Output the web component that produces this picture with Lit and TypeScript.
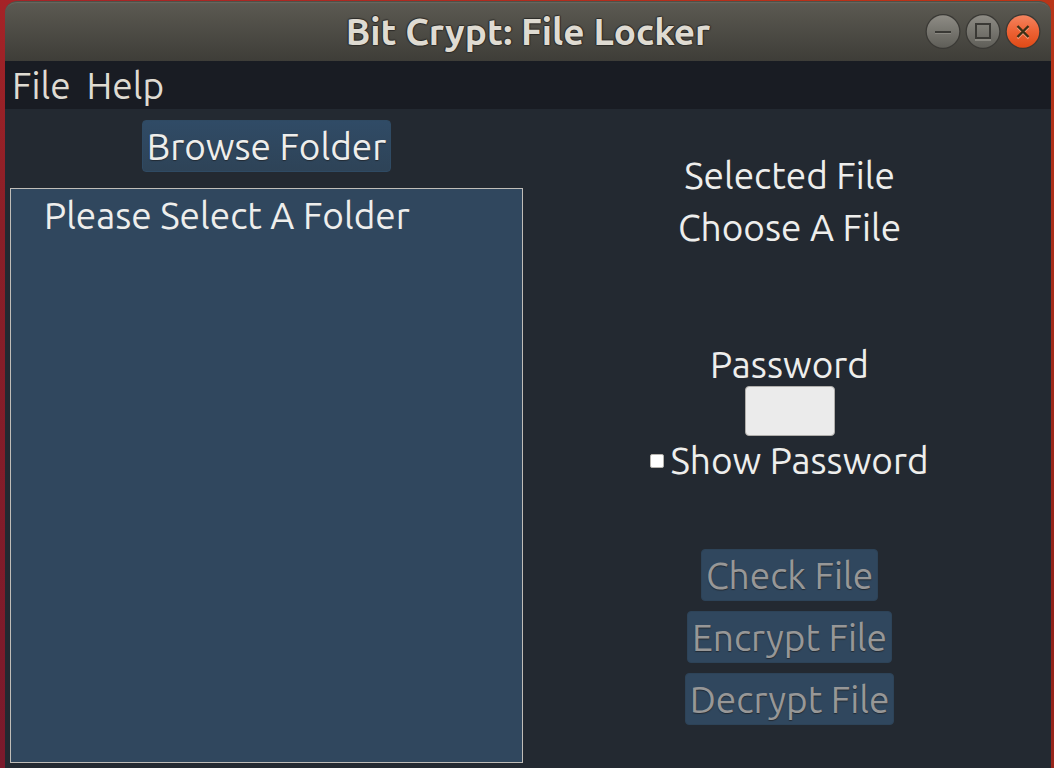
import { LitElement, html, css, svg } from "lit";
import { customElement, state } from "lit/decorators.js";

@customElement("window-titlebar")
class WindowTitlebar extends LitElement {
  static styles = css`
    :host {
      display: block;
    }
    .bar {
      position: relative;
      display: flex;
      align-items: center;
      justify-content: center;
      height: 60px;
      box-sizing: border-box;
      border-radius: 12px 12px 0 0;
      border-top: 1px solid #4e5149;
      background: linear-gradient(#5c5a52, #3e3d38);
      box-shadow: inset 0 2px 1px -1px #69675e;
    }
    .title {
      margin: 0;
      font: 700 37px/48px Ubuntu, "Noto Sans", sans-serif;
      color: #dfdbd2;
      text-shadow: 0 -1px 1px #2d2c29, 0 1px 1px #2d2c29, 1px 0 1px #2d2c29, -1px 0 1px #2d2c29;
    }
    .controls {
      position: absolute;
      right: 10px;
      top: 0;
      bottom: 0;
      display: flex;
      align-items: center;
      gap: 4px;
    }
    .control {
      width: 36px;
      height: 36px;
      padding: 0;
      border: 0;
      background: none;
    }
    .control svg {
      display: block;
    }
  `;

  private disc(fill: string, glyph: unknown) {
    return html`<svg width="36" height="36" viewBox="0 0 36 36" aria-hidden="true">
      <defs>
        <linearGradient id="grey" x1="0" y1="0" x2="0" y2="1">
          <stop offset="0" stop-color="#8e8c85" />
          <stop offset="1" stop-color="#5f5e58" />
        </linearGradient>
        <linearGradient id="orange" x1="0" y1="0" x2="0" y2="1">
          <stop offset="0" stop-color="#f4845f" />
          <stop offset="0.5" stop-color="#ed6234" />
          <stop offset="1" stop-color="#df4a16" />
        </linearGradient>
      </defs>
      <circle cx="18" cy="17.5" r="17.5" fill="#3a3935" />
      <circle cx="18" cy="17.5" r="16.2" fill="url(#${fill})" />
      ${glyph}
    </svg>`;
  }

  render() {
    return html`
      <header class="bar">
        <h1 class="title">Bit Crypt: File Locker</h1>
        <div class="controls">
          <button class="control" aria-label="Minimize">
            ${this.disc("grey", svg`<path d="M10 19.5h16" stroke="#8a8881" /><path d="M10 18h16" stroke="#3a3935" stroke-width="2" />`)}
          </button>
          <button class="control" aria-label="Maximize">
            ${this.disc("grey", svg`<path d="M10 26h16" stroke="#8a8881" stroke-width="2" /><rect x="11" y="10" width="14" height="14" fill="none" stroke="#3a3935" stroke-width="2" />`)}
          </button>
          <button class="control" aria-label="Close">
            ${this.disc("orange", svg`<path d="M12.5 13.5l11 11M23.5 13.5l-11 11" stroke="#f59a7a" stroke-width="2" /><path d="M12.5 12l11 11M23.5 12l-11 11" stroke="#3b3016" stroke-width="2.4" />`)}
          </button>
        </div>
      </header>
    `;
  }
}

@customElement("app-root")
class AppRoot extends LitElement {
  @state() private folder = "Please Select A Folder";
  @state() private file = "Choose A File";
  @state() private showPassword = false;

  static styles = css`
    :host {
      display: block;
      font: 37px/52px Ubuntu, "Noto Sans", sans-serif;
      color: #eeeeec;
    }
    .desktop {
      box-sizing: border-box;
      min-height: 100vh;
      display: flex;
      flex-direction: column;
      padding: 1px 3px 0 5px;
      background:
        linear-gradient(#a52327, #8a1f28 30%, #7a1a2c) left / 20px 100% no-repeat,
        linear-gradient(#b93518, #a02a1a 45%, #8f2119 80%, #98261c) right / 20px 100% no-repeat,
        linear-gradient(90deg, #a52327, #bf3414);
    }
    .menu {
      display: flex;
      gap: 16px;
      padding: 2px 7px 0;
      background: #191c23;
    }
    .menu-item {
      padding: 0;
      border: 0;
      background: none;
      color: #dfdbd2;
      font: inherit;
      line-height: 46px;
    }
    .content {
      flex: 1;
      display: grid;
      grid-template-columns: 1fr 1fr;
      background: #232931;
    }
    .folder-pane {
      display: flex;
      flex-direction: column;
      align-items: center;
      gap: 16px;
      padding: 11px 5px 5px;
    }
    .action {
      padding: 2px 4px 0;
      border: 1px solid #2f4a63;
      border-radius: 4px;
      background: linear-gradient(#304b66, #2e4357);
      color: #eeeeec;
      font: inherit;
      line-height: 48px;
      text-shadow: 0 1px 1px #222a33;
    }
    .action:disabled {
      border-color: #2d4358;
      background: #30475e;
      color: #979797;
    }
    .list {
      flex: 1;
      align-self: stretch;
      margin: 0;
      padding: 1px 33px;
      border: 1px solid #c0bdb8;
      background: #30475e;
      list-style: none;
    }
    .file-pane {
      display: flex;
      flex-direction: column;
      align-items: center;
      justify-content: space-between;
      padding: 41px 0 43px;
    }
    .group {
      display: flex;
      flex-direction: column;
      align-items: center;
    }
    .line {
      margin: 0;
    }
    .credentials {
      padding-top: 25px;
    }
    .password-label {
      padding-top: 2px;
      line-height: 42px;
    }
    .password {
      box-sizing: border-box;
      width: 90px;
      height: 50px;
      padding: 0 4px;
      border: 1px solid #b0aeab;
      border-radius: 4px;
      background: #ebebeb;
      font: inherit;
    }
    .toggle {
      display: flex;
      align-items: center;
      gap: 6px;
      line-height: 50px;
    }
    .tick {
      appearance: none;
      width: 14px;
      height: 14px;
      margin: 0;
      border: 1px solid #b5b2ad;
      border-radius: 2px;
      background: #ffffff;
    }
    .tick:checked {
      background: #30475e;
    }
    .actions {
      gap: 10px;
    }
  `;

  private onToggle(event: Event) {
    this.showPassword = (event.target as HTMLInputElement).checked;
  }

  render() {
    return html`
      <div class="desktop">
        <window-titlebar></window-titlebar>
        <nav class="menu">
          <button class="menu-item">File</button>
          <button class="menu-item">Help</button>
        </nav>
        <main class="content">
          <section class="folder-pane">
            <button class="action">Browse Folder</button>
            <ul class="list">
              <li>${this.folder}</li>
            </ul>
          </section>
          <section class="file-pane">
            <div class="group">
              <p class="line">Selected File</p>
              <p class="line">${this.file}</p>
            </div>
            <div class="group credentials">
              <label class="password-label" for="password">Password</label>
              <input class="password" id="password" type=${this.showPassword ? "text" : "password"} />
              <label class="toggle">
                <input class="tick" type="checkbox" .checked=${this.showPassword} @change=${this.onToggle} />
                Show Password
              </label>
            </div>
            <div class="group actions">
              <button class="action" disabled>Check File</button>
              <button class="action" disabled>Encrypt File</button>
              <button class="action" disabled>Decrypt File</button>
            </div>
          </section>
        </main>
      </div>
    `;
  }
}
